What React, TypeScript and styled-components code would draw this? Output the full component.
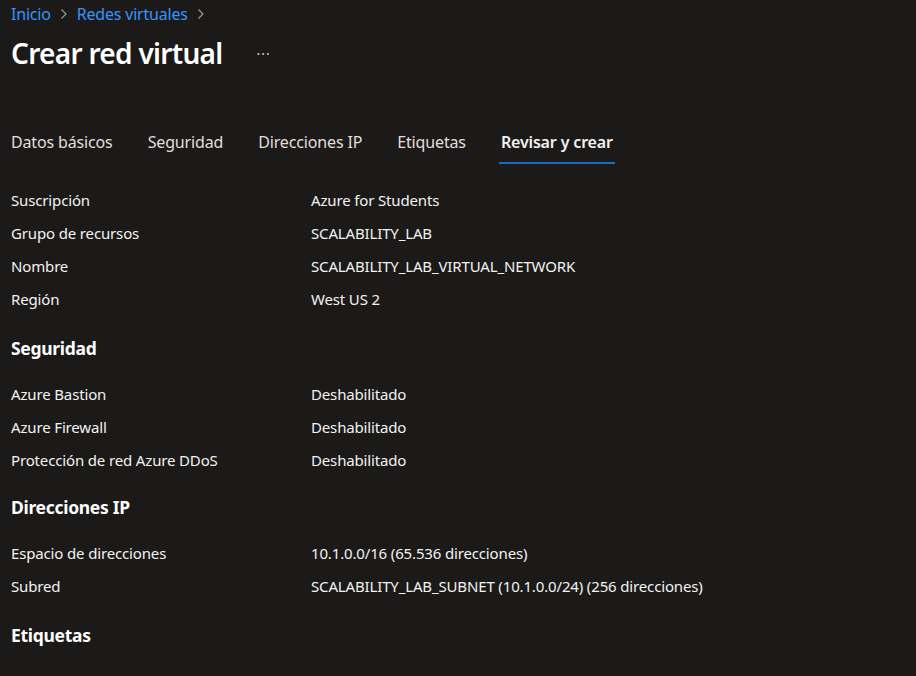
import React from "react";
import styled, { createGlobalStyle } from "styled-components";

const Global = createGlobalStyle`
  html, body { margin: 0; padding: 0; background: #1b1a19; }
  body { font-family: "Segoe UI", "Noto Sans", "Open Sans", sans-serif; color: #f3f2f1; }
`;

const Page = styled.div`
  width: 916px;
  height: 676px;
  background: #1b1a19;
  padding: 0 11px;
  box-sizing: border-box;
  overflow: hidden;
`;

const Breadcrumb = styled.nav`
  display: flex;
  align-items: center;
  height: 28px;
  font-size: 16px;
  letter-spacing: -0.2px;
`;

const Crumb = styled.a`
  color: #3794ff;
  text-decoration: none;
`;

const Chevron = styled.span`
  display: inline-flex;
  margin: 0 9px;
`;

const TitleRow = styled.div`
  display: flex;
  align-items: center;
  height: 50px;
`;

const Title = styled.h1`
  margin: 0;
  font-size: 28px;
  font-weight: 600;
  letter-spacing: -0.7px;
  color: #ffffff;
`;

const More = styled.span`
  margin-left: 34px;
  font-size: 14px;
  color: #d2d0ce;
  letter-spacing: 1px;
`;

const Tabs = styled.div`
  display: flex;
  gap: 35px;
  margin-top: 50px;
  height: 36px;
`;

const Tab = styled.div<{ $active?: boolean }>`
  font-size: 16px;
  letter-spacing: -0.15px;
  font-weight: ${(p) => (p.$active ? 600 : 400)};
  color: ${(p) => (p.$active ? "#f3f2f1" : "#e1dfdd")};
  padding: 3px 2px 0;
  margin: 0 -2px;
  border-bottom: 2px solid ${(p) => (p.$active ? "#1a6dc4" : "transparent")};
  height: 31px;
  box-sizing: content-box;
`;

const Summary = styled.div`
  margin-top: 19px;
  display: flex;
  flex-direction: column;
`;

const Row = styled.div`
  display: grid;
  grid-template-columns: 300px 1fr;
  height: 33px;
  align-items: center;
  font-size: 15px;
  letter-spacing: -0.15px;
  color: #f3f2f1;
`;

const SectionTitle = styled.h2`
  margin: 0;
  font-size: 17.5px;
  font-weight: 700;
  letter-spacing: -0.3px;
  color: #ffffff;
  height: 46px;
  display: flex;
  align-items: flex-start;
  padding-top: 5px;
  box-sizing: border-box;
`;

const SectionGap = styled.div<{ $size?: number }>`
  height: ${(p) => p.$size ?? 16}px;
`;

const ChevronIcon = () => (
  <svg width="8" height="12" viewBox="0 0 8 12" fill="none">
    <path d="M1.5 1.5 L6 6 L1.5 10.5" stroke="#a19f9d" strokeWidth="1.1" />
  </svg>
);

type Item = [string, string];

const Section: React.FC<{ title?: string; items: Item[] }> = ({ title, items }) => (
  <>
    {title && <SectionTitle>{title}</SectionTitle>}
    {items.map(([k, v]) => (
      <Row key={k}>
        <span>{k}</span>
        <span>{v}</span>
      </Row>
    ))}
  </>
);

export default function App() {
  return (
    <Page>
      <Global />
      <Breadcrumb>
        <Crumb>Inicio</Crumb>
        <Chevron><ChevronIcon /></Chevron>
        <Crumb>Redes virtuales</Crumb>
        <Chevron><ChevronIcon /></Chevron>
      </Breadcrumb>
      <TitleRow>
        <Title>Crear red virtual</Title>
        <More>···</More>
      </TitleRow>
      <Tabs>
        <Tab>Datos básicos</Tab>
        <Tab>Seguridad</Tab>
        <Tab>Direcciones IP</Tab>
        <Tab>Etiquetas</Tab>
        <Tab $active>Revisar y crear</Tab>
      </Tabs>
      <Summary>
        <Section
          items={[
            ["Suscripción", "Azure for Students"],
            ["Grupo de recursos", "SCALABILITY_LAB"],
            ["Nombre", "SCALABILITY_LAB_VIRTUAL_NETWORK"],
            ["Región", "West US 2"],
          ]}
        />
        <SectionGap />
        <Section
          title="Seguridad"
          items={[
            ["Azure Bastion", "Deshabilitado"],
            ["Azure Firewall", "Deshabilitado"],
            ["Protección de red Azure DDoS", "Deshabilitado"],
          ]}
        />
        <SectionGap $size={14} />
        <Section
          title="Direcciones IP"
          items={[
            ["Espacio de direcciones", "10.1.0.0/16 (65.536 direcciones)"],
            ["Subred", "SCALABILITY_LAB_SUBNET (10.1.0.0/24) (256 direcciones)"],
          ]}
        />
        <SectionGap $size={16} />
        <Section title="Etiquetas" items={[]} />
      </Summary>
    </Page>
  );
}
